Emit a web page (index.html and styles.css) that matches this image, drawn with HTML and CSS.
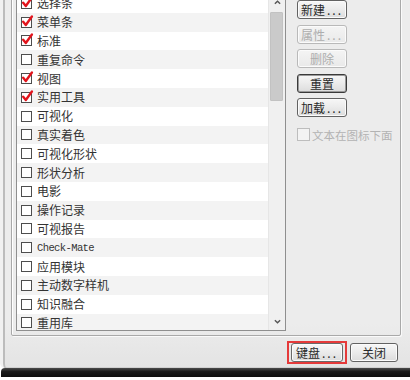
FILE: index.html
```html
<!DOCTYPE html>
<html lang="zh-CN">
<head>
<meta charset="utf-8">
<title>工具条</title>
<link rel="stylesheet" href="styles.css">
</head>
<body>
<div class="screen">
  <div class="window">
    <div class="group">
      <div class="list">
        <div class="rows">
          <div class="row"><span class="cb on"><svg viewBox="0 0 11 11"><path d="M2 5.2 L4.4 8.2 L10 0.5"/></svg></span><span class="lbl">选择条</span></div>
          <div class="row alt"><span class="cb on"><svg viewBox="0 0 11 11"><path d="M2 5.2 L4.4 8.2 L10 0.5"/></svg></span><span class="lbl">菜单条</span></div>
          <div class="row"><span class="cb on"><svg viewBox="0 0 11 11"><path d="M2 5.2 L4.4 8.2 L10 0.5"/></svg></span><span class="lbl">标准</span></div>
          <div class="row alt"><span class="cb"></span><span class="lbl">重复命令</span></div>
          <div class="row"><span class="cb on"><svg viewBox="0 0 11 11"><path d="M2 5.2 L4.4 8.2 L10 0.5"/></svg></span><span class="lbl">视图</span></div>
          <div class="row alt"><span class="cb on"><svg viewBox="0 0 11 11"><path d="M2 5.2 L4.4 8.2 L10 0.5"/></svg></span><span class="lbl">实用工具</span></div>
          <div class="row"><span class="cb"></span><span class="lbl">可视化</span></div>
          <div class="row alt"><span class="cb"></span><span class="lbl">真实着色</span></div>
          <div class="row"><span class="cb"></span><span class="lbl">可视化形状</span></div>
          <div class="row alt"><span class="cb"></span><span class="lbl">形状分析</span></div>
          <div class="row"><span class="cb"></span><span class="lbl">电影</span></div>
          <div class="row alt"><span class="cb"></span><span class="lbl">操作记录</span></div>
          <div class="row"><span class="cb"></span><span class="lbl">可视报告</span></div>
          <div class="row alt"><span class="cb"></span><span class="lbl mono">Check-Mate</span></div>
          <div class="row"><span class="cb"></span><span class="lbl">应用模块</span></div>
          <div class="row alt"><span class="cb"></span><span class="lbl">主动数字样机</span></div>
          <div class="row"><span class="cb"></span><span class="lbl">知识融合</span></div>
          <div class="row alt"><span class="cb"></span><span class="lbl">重用库</span></div>
        </div>
        <div class="scrollbar">
          <div class="sb-btn"><svg viewBox="0 0 8 5"><path d="M1 4 L4 1 L7 4"/></svg></div>
          <div class="thumb"></div>
          <div class="sb-track"></div>
          <div class="sb-btn"><svg viewBox="0 0 8 5"><path d="M1 1 L4 4 L7 1"/></svg></div>
        </div>
      </div>
      <div class="side">
        <div class="btn">新建<span class="dots">...</span></div>
        <div class="btn dis">属性<span class="dots">...</span></div>
        <div class="btn dis">删除</div>
        <div class="btn def">重置</div>
        <div class="btn">加载<span class="dots">...</span></div>
        <div class="chk dis"><span class="cb"></span><span>文本在图标下面</span></div>
      </div>
    </div>
    <div class="footer">
      <div class="mark"><div class="btn wide">键盘<span class="dots">...</span></div></div>
      <div class="btn">关闭</div>
    </div>
  </div>
  <div class="taskbar"></div>
</div>
</body>
</html>
```
FILE: styles.css
```css
html, body {
  margin: 0;
  padding: 0;
}
body {
  width: 410px;
  height: 380px;
  overflow: hidden;
  background: #ffffff;
  font-family: "Noto Sans CJK SC", "Liberation Sans", sans-serif;
  font-size: 12px;
  color: #333333;
}
.screen {
  width: 410px;
  height: 380px;
  display: flex;
  flex-direction: column;
  background: #ffffff;
}
.window {
  height: 368px;
  box-sizing: border-box;
  background: linear-gradient(#ececec 0, #ececec 88%, #e3e3e3 100%);
  border-left: 3px solid #f1f1f1;
  box-shadow: inset 2px 0 0 #bcbcbc, inset 0 -1px 0 #cfcfcf;
  border-bottom-left-radius: 5px;
  display: flex;
  flex-direction: column;
  overflow: hidden;
}
.group {
  margin: -14px 0 0 8px;
  width: 390px;
  height: 350px;
  box-sizing: border-box;
  border: 1px solid #a9a9a9;
  border-radius: 2px;
  box-shadow: inset 1px 1px 0 #ffffff, 1px 1px 0 #fafafa;
  padding: 6px 0 0 4px;
  display: flex;
  align-items: flex-start;
}
.list {
  width: 270px;
  height: 338px;
  box-sizing: border-box;
  border: 1px solid #8f8f8f;
  background: #ffffff;
  display: flex;
  overflow: hidden;
}
.rows {
  width: 252px;
  display: flex;
  flex-direction: column;
}
.row {
  height: 18.8px;
  flex: none;
  display: flex;
  align-items: center;
  padding-left: 4px;
  background: #ffffff;
}
.row.alt {
  background: #f3f3f3;
}
.cb {
  width: 11px;
  height: 11px;
  box-sizing: border-box;
  border: 1px solid #4d4d4d;
  background: #ffffff;
  flex: none;
  position: relative;
}
.cb svg {
  position: absolute;
  left: -1px;
  top: -2px;
  width: 12px;
  height: 12px;
  overflow: visible;
}
.cb svg path {
  fill: none;
  stroke: #e2141c;
  stroke-width: 2.2;
  stroke-linecap: round;
  stroke-linejoin: round;
}
.lbl {
  margin-left: 5px;
  line-height: 18px;
  white-space: nowrap;
}
.lbl.mono {
  font-family: "Liberation Mono", "DejaVu Sans Mono", monospace;
  font-size: 10.5px;
  letter-spacing: -0.6px;
  color: #333333;
}
.scrollbar {
  width: 16px;
  height: 100%;
  background: #f0f0f0;
  border-left: 1px solid #e6e6e6;
  display: flex;
  flex-direction: column;
}
.sb-btn {
  height: 17px;
  flex: none;
  display: flex;
  align-items: center;
  justify-content: center;
}
.sb-btn svg {
  width: 7px;
  height: 5px;
}
.sb-btn svg path {
  fill: none;
  stroke: #555555;
  stroke-width: 1.6;
}
.thumb {
  margin: 1px 0 0 1px;
  width: 13px;
  height: 89px;
  box-sizing: border-box;
  background: #cacaca;
  border: 1px solid #c2c2c2;
  border-radius: 1px;
  flex: none;
}
.sb-track {
  flex: 1;
}
.side {
  padding: 7px 0 0 11px;
  display: flex;
  flex-direction: column;
  gap: 5.5px;
}
.btn {
  width: 50px;
  height: 19px;
  box-sizing: border-box;
  border: 1px solid #626262;
  border-radius: 3px;
  background: linear-gradient(#f7f7f7 0, #ececec 45%, #dcdcdc 100%);
  box-shadow: inset 0 0 0 1px #fbfbfb;
  display: flex;
  align-items: center;
  justify-content: center;
  font-size: 12px;
  line-height: 17px;
  color: #2a2a2a;
  white-space: nowrap;
}
.btn.def {
  border-color: #3a3a3a;
  box-shadow: inset 0 0 0 1px #9a9a9a;
}
.btn.dis {
  border-color: #b9b9b9;
  color: #adadad;
  background: linear-gradient(#f4f4f4, #e9e9e9);
}
.dots {
  letter-spacing: 2px;
  margin-left: 2px;
  color: inherit;
}
.chk {
  margin-top: 4px;
  display: flex;
  align-items: center;
  font-size: 11.5px;
  color: #b3b3b3;
  white-space: nowrap;
}
.chk .cb {
  width: 13px;
  height: 13px;
  border-color: #bdbdbd;
  background: #f3f3f3;
  margin-right: 2px;
}
.footer {
  display: flex;
  justify-content: flex-end;
  align-items: center;
  gap: 3px;
  padding: 5px 12px 0 0;
}
.mark {
  border: 2px solid #e53a3a;
  padding: 0 2px;
  display: flex;
}
.btn.wide {
  width: 52px;
  border-color: #6a6a6a;
}
.footer > .btn {
  width: 48px;
}
.taskbar {
  height: 9px;
  margin-left: 1px;
  background: linear-gradient(#4a4a4a, #1a1a1a 40%, #0d0d0d);
  border-top-left-radius: 4px;
}
```
